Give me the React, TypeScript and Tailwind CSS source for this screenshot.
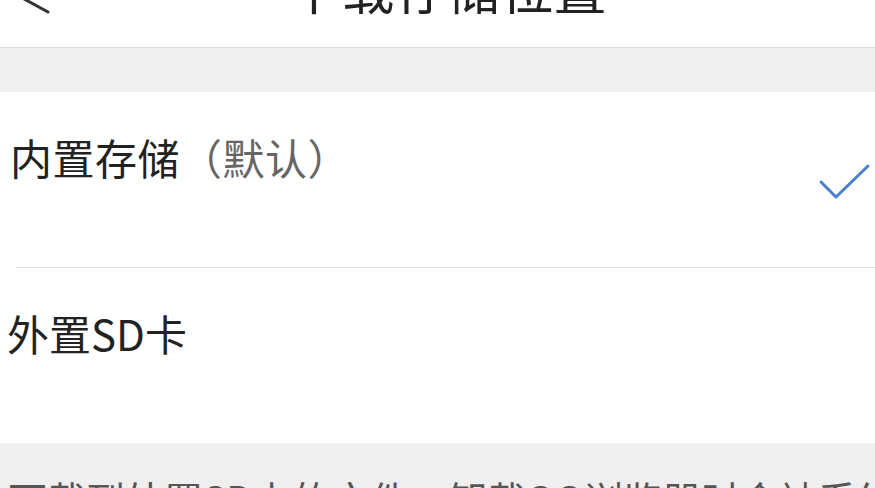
import React from "react";

const cjk = { fontFamily: '"Noto Sans CJK SC", "Noto Sans", sans-serif' };

function BackChevron() {
  return (
    <svg width="60" height="44" viewBox="0 0 60 44" className="absolute left-0 top-[-30px]">
      <path d="M48 -6 L4 18 L48 42" fill="none" stroke="#333" strokeWidth="3" strokeLinecap="round" strokeLinejoin="round" />
    </svg>
  );
}

function Check() {
  return (
    <svg width="54" height="40" viewBox="0 0 54 40" className="shrink-0">
      <path d="M3 19 L18 34 L50 3" fill="none" stroke="#4a80d2" strokeWidth="3" strokeLinecap="round" strokeLinejoin="round" />
    </svg>
  );
}

export default function App() {
  return (
    <div className="w-[875px] h-[488px] overflow-hidden bg-white text-[#222]" style={cjk}>
      {/* top bar */}
      <header className="relative h-[48px] overflow-hidden border-b border-[#dcdcdc] bg-white">
        <BackChevron />
        <div className="flex justify-center pl-[20px]">
          <h1 className="mt-[-39px] text-[53px] leading-none font-normal text-[#222]">下载存储位置</h1>
        </div>
      </header>

      <div className="h-[44px] bg-[#efefef]" />

      <section className="bg-white">
        <div className="flex h-[175px] items-start justify-between pr-[3px]">
          <div className="mt-[44px] pl-[10px] text-[42px] leading-none tracking-[0.5px]">
            内置存储<span className="text-[#666]">（默认）</span>
          </div>
          <div className="mt-[71px]">
            <Check />
          </div>
        </div>
        <div className="ml-[16px] h-px bg-[#e4e4e4]" />
        <div className="h-[175px] pt-[44px]">
          <div className="pl-[7px] text-[42px] leading-none">外置SD卡</div>
        </div>
      </section>

      <div className="h-[45px] bg-[#efefef] pt-[36px]">
        <p className="whitespace-nowrap pl-[8px] text-[39px] leading-none text-[#555]">
          下载到外置SD卡的文件，卸载QQ浏览器时会被系统删除
        </p>
      </div>
    </div>
  );
}
